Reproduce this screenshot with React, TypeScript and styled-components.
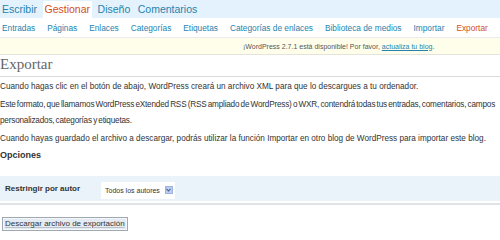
import styled, { createGlobalStyle } from "styled-components";

const GlobalStyle = createGlobalStyle`
  html, body {
    margin: 0;
    padding: 0;
    background: #fff;
  }
  body {
    width: 500px;
    height: 240px;
    overflow: hidden;
    font-family: "Liberation Sans", Arial, sans-serif;
    color: #333;
  }
`;

const TopMenu = styled.ul`
  display: flex;
  align-items: flex-end;
  margin: 0;
  padding: 0;
  height: 18px;
  background: #e4f2fd;
  list-style: none;
`;

const TopTab = styled.li<{ $active?: boolean }>`
  display: flex;
  align-items: center;
  height: 17px;
  padding: 0 2px 1px;
  box-sizing: border-box;
  margin-right: 3.5px;
  font-size: 10.5px;
  color: ${(p) => (p.$active ? "#d54e21" : "#2583ad")};
  background: ${(p) => (p.$active ? "#fff" : "transparent")};
`;

const SubMenu = styled.ul`
  display: flex;
  align-items: center;
  margin: 0;
  padding: 0 0 0 2px;
  height: 19px;
  list-style: none;
  border-bottom: 1px solid #ececec;
`;

const SubItem = styled.li<{ $current?: boolean }>`
  margin-right: 12px;
  font-size: 8.3px;
  white-space: nowrap;
  color: ${(p) => (p.$current ? "#d54e21" : "#2583ad")};
`;

const UpdateNag = styled.div`
  height: 16px;
  display: flex;
  align-items: center;
  padding-left: 243px;
  background: #fffeeb;
  border-bottom: 1px solid #e4e4dc;
  font-size: 7px;
  color: #555;
  white-space: nowrap;

  a {
    color: #2583ad;
    text-decoration: underline;
    margin-left: 2px;
  }
`;

const Wrap = styled.div`
  padding: 0;
`;

const Title = styled.h2`
  margin: 0;
  padding: 0 0 3px;
  font-family: "Liberation Serif", "Times New Roman", serif;
  font-weight: normal;
  font-size: 15px;
  line-height: 18px;
  color: #666;
  border-bottom: 1px solid #dadada;
`;

const Para = styled.p<{ $tight?: boolean }>`
  margin: 2px 0 0;
  font-size: 8.2px;
  line-height: 16px;
  color: #333;
  letter-spacing: ${(p) => (p.$tight ? "-0.2px" : "normal")};
  word-spacing: ${(p) => (p.$tight ? "-0.8px" : "normal")};
`;

const SectionTitle = styled.h3`
  margin: 1px 0 0;
  font-size: 9px;
  line-height: 14px;
  font-weight: bold;
  color: #333;
`;

const FormTable = styled.div`
  margin-top: 14px;
  display: grid;
  grid-template-columns: 96px 1fr;
  align-items: center;
  height: 25px;
  padding: 0 5px;
  background: #eaf3fa;
  border-bottom: 2px solid #fff;
  box-shadow: 0 2px 0 #e0e4e8;
`;

const RowLabel = styled.div`
  font-size: 8px;
  font-weight: bold;
  color: #333;
`;

const SelectBox = styled.div`
  display: inline-flex;
  align-items: center;
  gap: 5px;
  width: fit-content;
  height: 17px;
  padding: 0 2px 0 4px;
  background: #fff;
  font-size: 7px;
  color: #333;
`;

const SelectArrow = styled.span`
  display: inline-flex;
  align-items: center;
  justify-content: center;
  width: 8px;
  height: 8px;
  background: #bccff3;
  border: 1px solid #9cb3e0;
  box-sizing: border-box;
`;

const SubmitRow = styled.div`
  margin-top: 14px;
  padding-left: 2px;
`;

const Button = styled.button`
  display: block;
  padding: 0 2px;
  height: 14px;
  font-family: "Liberation Sans", Arial, sans-serif;
  font-size: 8px;
  line-height: 12px;
  color: #333;
  background: #e4ebf3;
  border: 1px solid #a0a8b2;
  box-shadow: inset 0 0 0 1px #f4f7fa;
  text-decoration: underline;
  text-decoration-color: #b8c0ca;
  cursor: pointer;
`;

const topTabs = ["Escribir", "Gestionar", "Diseño", "Comentarios"];
const subItems = [
  "Entradas",
  "Páginas",
  "Enlaces",
  "Categorías",
  "Etiquetas",
  "Categorías de enlaces",
  "Biblioteca de medios",
  "Importar",
  "Exportar",
];

export default function App() {
  return (
    <>
      <GlobalStyle />
      <TopMenu>
        {topTabs.map((t) => (
          <TopTab key={t} $active={t === "Gestionar"}>
            {t}
          </TopTab>
        ))}
      </TopMenu>
      <SubMenu>
        {subItems.map((s) => (
          <SubItem key={s} $current={s === "Exportar"}>
            {s}
          </SubItem>
        ))}
      </SubMenu>
      <UpdateNag>
        ¡WordPress 2.7.1 está disponible! Por favor,
        <a href="#">actualiza tu blog</a>.
      </UpdateNag>
      <Wrap>
        <Title>Exportar</Title>
        <Para>
          Cuando hagas clic en el botón de abajo, WordPress creará un archivo
          XML para que lo descargues a tu ordenador.
        </Para>
        <Para $tight>
          Este formato, que llamamos WordPress eXtended RSS (RSS ampliado de
          WordPress) o WXR, contendrá todas tus entradas, comentarios, campos
          personalizados, categorías y etiquetas.
        </Para>
        <Para>
          Cuando hayas guardado el archivo a descargar, podrás utilizar la
          función Importar en otro blog de WordPress para importar este blog.
        </Para>
        <SectionTitle>Opciones</SectionTitle>
        <FormTable>
          <RowLabel>Restringir por autor</RowLabel>
          <div>
            <SelectBox>
              Todos los autores
              <SelectArrow>
                <svg width="5" height="4" viewBox="0 0 5 4">
                  <path d="M0.5 0.8 L2.5 3 L4.5 0.8" fill="none" stroke="#4a5f8c" strokeWidth="1.1" />
                </svg>
              </SelectArrow>
            </SelectBox>
          </div>
        </FormTable>
        <SubmitRow>
          <Button>Descargar archivo de exportación</Button>
        </SubmitRow>
      </Wrap>
    </>
  );
}
